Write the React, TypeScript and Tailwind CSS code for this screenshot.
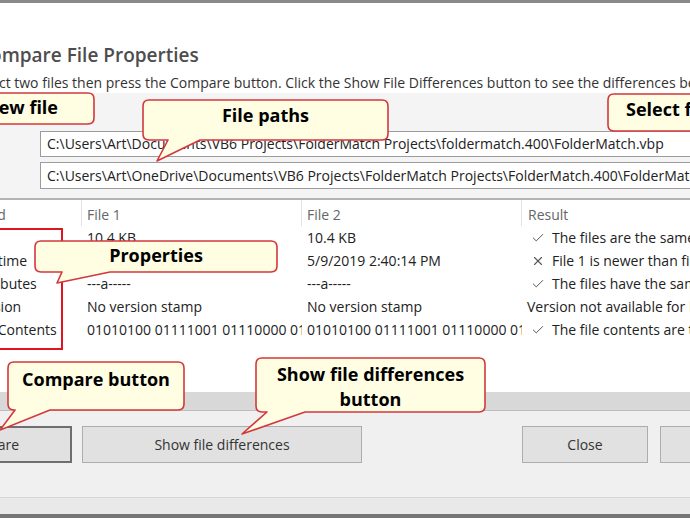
import { Check, X } from 'lucide-react'
import type { ReactNode } from 'react'

type CalloutProps = {
  x: number
  y: number
  w: number
  h: number
  tail?: [number, number, number, number]
  className?: string
  children: ReactNode
}

// yellow balloon with red outline, tail on the bottom edge
function Callout({ x, y, w, h, tail, className, children }: CalloutProps) {
  const r = 6
  let d = `M ${r} 0 H ${w - r} Q ${w} 0 ${w} ${r} V ${h - r} Q ${w} ${h} ${w - r} ${h}`
  if (tail) {
    const [b1, b2, tx, ty] = tail
    d += ` H ${b2} L ${tx} ${ty} L ${b1} ${h}`
  }
  d += ` H ${r} Q 0 ${h} 0 ${h - r} V ${r} Q 0 0 ${r} 0 Z`

  return (
    <div className="absolute" style={{ left: x, top: y, width: w, height: h }}>
      <svg className="absolute inset-0 overflow-visible" width={w} height={h}>
        <path d={d} fill="#fffde2" stroke="#d2383c" strokeWidth={1.6} strokeLinejoin="round" />
      </svg>
      <div className={`relative text-[18px] font-bold text-black leading-[25px] ${className ?? ''}`}>{children}</div>
    </div>
  )
}

const rows = [
  { field: 'Size', f1: '10.4 KB', f2: '10.4 KB', icon: 'ok', result: 'The files are the same size' },
  { field: 'File time', f1: '5/9/2019 2:40:14 PM', f2: '5/9/2019 2:40:14 PM', icon: 'bad', result: 'File 1 is newer than file 2' },
  { field: 'Attributes', f1: '---a-----', f2: '---a-----', icon: 'ok', result: 'The files have the same attributes' },
  { field: 'Version', f1: 'No version stamp', f2: 'No version stamp', icon: '', result: 'Version not available for both files' },
  { field: 'File Contents', f1: '01010100 01111001 01110000 01...', f2: '01010100 01111001 01110000 01...', icon: 'ok', result: 'The file contents are the same' },
]

export default function App() {
  return (
    <div className="relative w-[690px] h-[518px] overflow-hidden bg-white font-['Open_Sans',sans-serif] text-[14px] text-[#222]">
      <div className="h-[3px] bg-[#8a8a8a]" />

      <div className="ml-[-30px] w-[760px] flex flex-col">
        {/* header */}
        <div className="pt-[40px] h-[90px]">
          <div className="pl-[8px] text-[19px] leading-[24px] font-semibold text-[#4d4d4d] whitespace-nowrap">
            Compare File Properties
          </div>
          <div className="mt-[6px] pl-[2px] leading-[20px] text-[#333] whitespace-nowrap">
            Select two files then press the Compare button. Click the Show File Differences button to see the differences between them.
          </div>
        </div>

        {/* file paths */}
        <div className="bg-[#f4f4f4] pt-[38px] pb-[9px] pl-[70px] flex flex-col gap-[5px]">
          <div className="h-[26px] border border-[#9c9c9c] bg-white px-[6px] leading-[24px] whitespace-nowrap">
            C:\Users\Art\Documents\VB6 Projects\FolderMatch Projects\foldermatch.400\FolderMatch.vbp
          </div>
          <div className="h-[27px] border border-[#9c9c9c] bg-white px-[6px] leading-[25px] whitespace-nowrap">
            C:\Users\Art\OneDrive\Documents\VB6 Projects\FolderMatch Projects\FolderMatch.400\FolderMatch.vbp
          </div>
        </div>

        {/* list */}
        <div className="h-[194px] border-t-2 border-[#b4b4b4] bg-white">
          <div className="grid grid-cols-[112px_220px_220px_1fr] h-[26px] text-[#666]">
            <div className="pl-[5px] pt-[4px] leading-[22px] border-r border-[#e3e3e3]">Field</div>
            <div className="pl-[5px] pt-[4px] leading-[22px] border-r border-[#e3e3e3]">File 1</div>
            <div className="pl-[5px] pt-[4px] leading-[22px] border-r border-[#e3e3e3]">File 2</div>
            <div className="pl-[6px] pt-[4px] leading-[22px]">Result</div>
          </div>
          {rows.map((r) => (
            <div key={r.field} className="grid grid-cols-[112px_220px_220px_1fr] h-[23px] leading-[23px] whitespace-nowrap">
              <div className="pl-[2px] overflow-hidden">{r.field}</div>
              <div className="pl-[5px] overflow-hidden">{r.f1}</div>
              <div className="pl-[5px] overflow-hidden">{r.f2}</div>
              <div className="pl-[5px] flex items-center gap-[7px]">
                {r.icon === 'ok' && <Check size={14} strokeWidth={1.7} className="ml-[4px] text-[#555]" />}
                {r.icon === 'bad' && <X size={14} strokeWidth={1.9} className="ml-[4px] text-[#555]" />}
                <span>{r.result}</span>
              </div>
            </div>
          ))}
        </div>

        <div className="h-[19px] bg-[#d8d8d8] border-b border-[#bdbdbd]" />

        {/* buttons */}
        <div className="h-[86px] bg-[#f0f0f0] pt-[15px] flex items-start text-[#333]">
          <button className="shrink-0 ml-[-64px] w-[166px] h-[37px] border-2 border-[#6f6f6f] bg-[#e1e1e1]">Compare</button>
          <button className="shrink-0 ml-[10px] w-[280px] h-[37px] border border-[#adadad] bg-[#e1e1e1]">Show file differences</button>
          <button className="shrink-0 ml-[160px] w-[126px] h-[37px] border border-[#adadad] bg-[#e1e1e1]">Close</button>
          <button className="shrink-0 ml-[12px] w-[126px] h-[37px] border border-[#adadad] bg-[#e1e1e1]">Help</button>
        </div>

        <div className="h-[17px] border-t border-[#d6d6d6] bg-[#e9e9e9]" />
        <div className="h-[4px] bg-[#767676]" />
      </div>

      {/* highlight around field names */}
      <div className="absolute left-[-10px] top-[228px] w-[73px] h-[122px] border-2 border-[#e0141e]" />

      {/* annotations */}
      <Callout x={-60} y={93} w={154} h={31} className="text-right pr-[36px] pt-[2px] whitespace-nowrap">
        New file
      </Callout>
      <Callout x={143} y={100} w={245} h={40} tail={[25, 57, 14, 61]} className="text-center pt-[3px]">
        File paths
      </Callout>
      <Callout x={608} y={94} w={120} h={37} className="pl-[18px] pt-[3px] whitespace-nowrap">
        Select file
      </Callout>
      <Callout x={35} y={241} w={242} h={31} tail={[27, 75, 22, 42]} className="text-center pt-[2px]">
        Properties
      </Callout>
      <Callout x={8} y={362} w={176} h={48} tail={[7, 42, -8, 68]} className="text-center pt-[5px]">
        Compare button
      </Callout>
      <Callout x={256} y={358} w={229} h={54} tail={[11, 49, -14, 76]} className="text-center pt-[4px]">
        Show file differences
        <br />
        button
      </Callout>
    </div>
  )
}
